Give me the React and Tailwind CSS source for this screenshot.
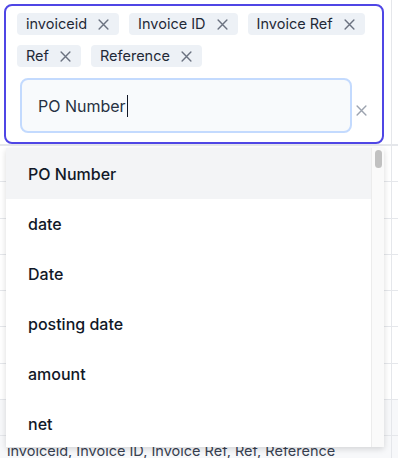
import React from "react";

const XIcon = ({ className }) => (
  <svg viewBox="0 0 10 10" className={className} fill="none" stroke="currentColor" strokeWidth="1.3" strokeLinecap="round">
    <path d="M1 1L9 9M9 1L1 9" />
  </svg>
);

const Chip = ({ label }) => (
  <div className="flex items-center h-[22px] rounded-[4px] bg-[#edf1f6] pl-[9px] pr-[10px] gap-[11px]">
    <span className="text-[14.5px] leading-none text-[#1f2937]">{label}</span>
    <XIcon className="w-[11px] h-[11px] text-[#6b7280]" />
  </div>
);

const items = ["PO Number", "date", "Date", "posting date", "amount", "net", "tax", "total"];

export default function App() {
  const rows = Array.from({ length: 8 });
  return (
    <div className="relative w-[398px] h-[458px] overflow-hidden bg-white" style={{ fontFamily: "Inter, 'Noto Sans', sans-serif" }}>
      {/* background table */}
      <div className="flex flex-col">
        <div className="flex h-[146px] border-b-2 border-[#e5e7eb]">
          <div className="w-[392px] border-r border-[#e5e7eb]" />
          <div className="flex-1" />
        </div>
        {rows.map((_, i) => (
          <div key={i} className={`flex h-[36.3px] border-b border-[#e5e7eb] ${i === 7 ? "bg-[#f7f8fa]" : ""}`}>
            <div className="w-[392px] border-r border-[#e5e7eb]" />
            <div className="flex-1" />
          </div>
        ))}
        <div className="flex h-[40px] bg-[#f7f8fa]">
          <div className="w-[392px] border-r border-[#e5e7eb] pl-[7px] pt-[6px] text-[14.5px] leading-[18px] text-[#374151] whitespace-nowrap">
            invoiceid, Invoice ID, Invoice Ref, Ref, Reference
          </div>
          <div className="flex-1" />
        </div>
      </div>

      {/* editor */}
      <div className="absolute left-[4px] top-[4px] w-[380px] h-[140px] rounded-[8px] border-2 border-[#4f46e5] bg-white pl-[11px] pt-[7px]">
        <div className="flex flex-wrap gap-[10px] w-[350px]">
          <Chip label="invoiceid" />
          <Chip label="Invoice ID" />
          <Chip label="Invoice Ref" />
          <Chip label="Ref" />
          <Chip label="Reference" />
        </div>
        <div className="flex items-center mt-[11px] ml-[3px]">
          <div className="w-[332px] h-[55px] rounded-[8px] border-2 border-[#c3dafe] bg-[#f8fafc] flex items-center pl-[16px]">
            <span className="text-[16px] text-[#273142]">PO Number</span>
            <span className="w-px h-[22px] bg-[#111827] ml-[1px]" />
          </div>
          <XIcon className="w-[11px] h-[11px] text-[#9ca3af] ml-[4px] mt-[10px]" />
        </div>
      </div>

      {/* dropdown */}
      <div className="absolute left-[6px] top-[148px] w-[378px] h-[299px] bg-white shadow-[0_2px_6px_rgba(0,0,0,0.15)] flex">
        <div className="flex-1 overflow-hidden">
          {items.map((t, i) => (
            <div key={t} className={`flex items-center pl-[22px] text-[16px] font-medium text-[#111827] ${i === 0 ? "bg-[#f3f4f6] h-[51px]" : "h-[50px]"}`}>
              {t}
            </div>
          ))}
        </div>
        <div className="w-[13px] border-l border-[#ececec] bg-[#fafafa] flex justify-center pt-[2px]">
          <div className="w-[7px] h-[18px] rounded-full bg-[#c1c1c1]" />
        </div>
      </div>
    </div>
  );
}
